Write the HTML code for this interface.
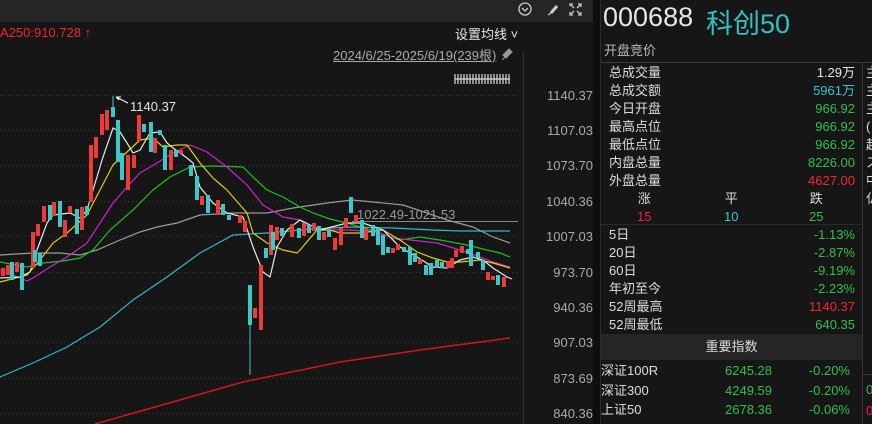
<!DOCTYPE html>
<html><head><meta charset="utf-8"><style>
*{margin:0;padding:0;box-sizing:border-box}
body{width:872px;height:424px;background:#161616;overflow:hidden;position:relative;font-family:"Liberation Sans","Noto Sans CJK SC",sans-serif;font-size:13px;color:#ddd}
.a{position:absolute;white-space:nowrap}
.r{text-align:right}
.g{color:#2fbf4f}.rd{color:#f0262e}.c{color:#3cc4d0}.w{color:#e6e6e6}
</style></head><body>
<div class="a" style="left:0;top:0;width:594px;height:22px;background:#252525"></div>
<svg class="a" style="left:0;top:0" width="600" height="424">
<g fill="none" stroke="#ccc" stroke-width="1.3">
<circle cx="525" cy="9" r="6"/><path d="M522 8l3 3 3-3"/>
<path d="M551 13l6-7" stroke-width="3"/><path d="M548 15l3-2"/>
<path d="M570 6v-2h3M578 4h3v3M570 12v3h3M578 15h3v-3M571 5l3 3M580 5l-3 3M571 14l3-3M580 14l-3-3"/>
</g>
<g stroke="#3a3a3a" stroke-dasharray="1 3">
<line x1="0" y1="95.5" x2="520" y2="95.5"/><line x1="0" y1="130.5" x2="520" y2="130.5"/><line x1="0" y1="165.5" x2="520" y2="165.5"/><line x1="0" y1="201.5" x2="520" y2="201.5"/><line x1="0" y1="236.5" x2="520" y2="236.5"/><line x1="0" y1="272.5" x2="520" y2="272.5"/><line x1="0" y1="307.5" x2="520" y2="307.5"/><line x1="0" y1="342.5" x2="520" y2="342.5"/><line x1="0" y1="378.5" x2="520" y2="378.5"/><line x1="0" y1="413.5" x2="520" y2="413.5"/>
</g>
<line x1="523.5" y1="52" x2="523.5" y2="424" stroke="#333"/>
<line x1="352" y1="221.5" x2="518" y2="221.5" stroke="#888"/>
<g fill="none" stroke-width="1.2">
<polyline stroke="#2fb8c8" points="0,377 33,363 67,347 100,327 133,300 167,277 200,253 233,235 267,233 300,230 347,227 393,228 433,230 460,231 510,231"/>
<polyline stroke="#d01818" stroke-width="1.5" points="95,424 243,382 340,362 420,350 510,338"/>
<polyline stroke="#9a9a9a" points="0,255 33,253 60,253 80,255 97,250 120,240 140,232 157,227 177,223 200,215 233,213 267,213 293,208 327,203 352,200 373,202 403,205 427,213 447,220 473,227 493,237 510,243"/>
<polyline stroke="#1fbf1f" points="0,262 27,267 43,263 63,261 80,258 93,250 110,230 133,210 153,190 170,177 190,167 213,166 243,167 253,177 267,190 283,197 300,207 313,213 330,219 347,223 360,227 400,240 420,237 440,240 467,245 487,250 500,253 510,257"/>
<polyline stroke="#d020d0" points="0,270 13,275 27,281 33,278 50,267 67,257 87,243 100,223 113,203 127,187 140,173 157,163 173,153 190,145 207,152 227,167 247,185 263,205 283,217 300,220 313,230 333,230 350,230 377,232 393,238 437,243 460,250 480,257 493,262 510,267"/>
<polyline stroke="#e0d000" points="0,282 27,275 40,260 53,243 67,233 87,215 100,190 113,165 127,152 140,140 153,138 163,147 177,145 187,145 200,163 213,178 227,190 247,213 253,233 267,243 283,250 297,253 300,250 317,230 330,230 340,233 360,233 383,230 400,240 417,252 433,258 447,262 460,262 480,260 493,263 510,268"/>
<polyline stroke="#e8e8e8" points="0,278 20,277 30,272 37,250 47,223 53,215 70,213 80,218 87,210 93,190 103,157 113,128 120,132 127,143 133,153 140,150 150,133 160,132 167,143 173,148 187,158 193,163 200,187 213,203 227,213 243,217 253,247 263,272 270,277 277,247 287,230 300,220 320,230 347,223 363,223 383,230 400,247 417,257 433,267 447,268 460,260 473,257 483,260 493,268 507,277 512,279"/>
</g>
<g fill="#f03a3a">
<rect x="1" y="268" width="4" height="8"/><rect x="6" y="265" width="4" height="10"/><rect x="15" y="262" width="4" height="10"/><rect x="31" y="232" width="4" height="36"/><rect x="36" y="224" width="4" height="12"/><rect x="42" y="206" width="4" height="16"/><rect x="52" y="202" width="4" height="14"/><rect x="63" y="220" width="4" height="17"/><rect x="68" y="206" width="4" height="7"/><rect x="80" y="207" width="4" height="23"/><rect x="89" y="145" width="4" height="57"/><rect x="94" y="137" width="4" height="21"/><rect x="100" y="114" width="4" height="21"/><rect x="105" y="110" width="4" height="20"/><rect x="126" y="155" width="4" height="35"/><rect x="132" y="155" width="4" height="13"/><rect x="137" y="115" width="4" height="26"/><rect x="153" y="138" width="4" height="15"/><rect x="169" y="150" width="4" height="20"/><rect x="179" y="150" width="4" height="4"/><rect x="200" y="196" width="4" height="9"/><rect x="216" y="200" width="4" height="15"/><rect x="238" y="215" width="4" height="8"/><rect x="243" y="221" width="4" height="11"/><rect x="253" y="308" width="4" height="10"/><rect x="259" y="265" width="4" height="65"/><rect x="275" y="227" width="4" height="13"/><rect x="269" y="225" width="4" height="30"/><rect x="290" y="224" width="4" height="13"/><rect x="302" y="223" width="4" height="13"/><rect x="312" y="223" width="4" height="8"/><rect x="322" y="232" width="4" height="8"/><rect x="333" y="238" width="4" height="12"/><rect x="339" y="228" width="4" height="17"/><rect x="344" y="218" width="4" height="10"/><rect x="354" y="215" width="4" height="7"/><rect x="364" y="228" width="4" height="12"/><rect x="391" y="248" width="4" height="5"/><rect x="396" y="244" width="4" height="6"/><rect x="418" y="259" width="4" height="5"/><rect x="446" y="262" width="4" height="6"/><rect x="450" y="258" width="4" height="10"/><rect x="454" y="250" width="4" height="7"/><rect x="460" y="246" width="4" height="7"/><rect x="486" y="272" width="4" height="8"/><rect x="491" y="276" width="4" height="4"/><rect x="502" y="277" width="4" height="10"/>
</g>
<g fill="#3cc8c8">
<rect x="10" y="262" width="4" height="18"/><rect x="20" y="263" width="4" height="27"/><rect x="33" y="250" width="4" height="12"/><rect x="38" y="253" width="4" height="13"/><rect x="48" y="205" width="4" height="15"/><rect x="58" y="201" width="4" height="26"/><rect x="75" y="209" width="4" height="25"/><rect x="85" y="206" width="4" height="9"/><rect x="111" y="107" width="4" height="10"/><rect x="116" y="120" width="4" height="42"/><rect x="120" y="153" width="4" height="27"/><rect x="142" y="124" width="4" height="8"/><rect x="149" y="122" width="4" height="30"/><rect x="158" y="130" width="4" height="5"/><rect x="163" y="145" width="4" height="25"/><rect x="174" y="150" width="4" height="7"/><rect x="189" y="165" width="4" height="11"/><rect x="195" y="176" width="4" height="24"/><rect x="206" y="195" width="4" height="18"/><rect x="221" y="204" width="4" height="11"/><rect x="227" y="215" width="4" height="5"/><rect x="248" y="285" width="4" height="40"/><rect x="264" y="248" width="4" height="10"/><rect x="271" y="232" width="4" height="18"/><rect x="280" y="228" width="4" height="8"/><rect x="297" y="228" width="4" height="10"/><rect x="307" y="225" width="4" height="8"/><rect x="317" y="226" width="4" height="14"/><rect x="327" y="230" width="4" height="7"/><rect x="349" y="197" width="4" height="16"/><rect x="360" y="220" width="4" height="18"/><rect x="371" y="225" width="4" height="11"/><rect x="376" y="228" width="4" height="17"/><rect x="381" y="235" width="4" height="20"/><rect x="386" y="247" width="4" height="6"/><rect x="402" y="247" width="4" height="5"/><rect x="408" y="247" width="4" height="18"/><rect x="413" y="253" width="4" height="9"/><rect x="424" y="265" width="4" height="10"/><rect x="429" y="263" width="4" height="12"/><rect x="435" y="260" width="4" height="8"/><rect x="440" y="262" width="4" height="6"/><rect x="466" y="249" width="4" height="5"/><rect x="469" y="240" width="4" height="26"/><rect x="476" y="252" width="4" height="6"/><rect x="481" y="260" width="4" height="10"/><rect x="496" y="275" width="4" height="10"/>
</g>
<line x1="250" y1="325" x2="250" y2="375" stroke="#3cc8c8"/><line x1="113" y1="96" x2="113" y2="108" stroke="#3cc8c8"/>
<path d="M116 97l12 6M116 97l5 0M116 97l3 3" stroke="#fff" fill="none"/>
<path d="M455 79h55M455 74v10M458 74v10M461 74v10M464 74v10M467 74v10M470 74v10M473 74v10M476 74v10M479 74v10M482 74v10M485 74v10M488 74v10M491 74v10M494 74v10M497 74v10M500 74v10M503 74v10M506 74v10M509 74v10" stroke="#ddd" stroke-width="1.2"/>
<path d="M503 55l6-6 3 3-6 6zM505 57l-3 3" fill="#999" stroke="#999"/>
</svg>
<div class="a rd" style="left:0;top:25px;font-size:13px">A250:910.728 ↑</div>
<div class="a w" style="left:455px;top:24px">设置均线 ˅</div>
<div class="a" style="left:333px;top:45px;color:#aaa;text-decoration:underline">2024/6/25-2025/6/19(239根)</div>
<div class="a w" style="left:130px;top:99px">1140.37</div>
<div class="a" style="left:357px;top:207px;color:#999">1022.49-1021.53</div>
<div class="a r" style="left:530px;width:63px;top:88px;color:#aaa;line-height:16px">1140.37</div>
<div class="a r" style="left:530px;width:63px;top:123px;color:#aaa;line-height:16px">1107.03</div>
<div class="a r" style="left:530px;width:63px;top:158px;color:#aaa;line-height:16px">1073.70</div>
<div class="a r" style="left:530px;width:63px;top:194px;color:#aaa;line-height:16px">1040.36</div>
<div class="a r" style="left:530px;width:63px;top:229px;color:#aaa;line-height:16px">1007.03</div>
<div class="a r" style="left:530px;width:63px;top:265px;color:#aaa;line-height:16px">973.70</div>
<div class="a r" style="left:530px;width:63px;top:300px;color:#aaa;line-height:16px">940.36</div>
<div class="a r" style="left:530px;width:63px;top:335px;color:#aaa;line-height:16px">907.03</div>
<div class="a r" style="left:530px;width:63px;top:371px;color:#aaa;line-height:16px">873.69</div>
<div class="a r" style="left:530px;width:63px;top:406px;color:#aaa;line-height:16px">840.36</div>

<div class="a" style="left:593px;top:0;width:8px;height:424px;background:#0e0e0e"></div>
<div class="a" style="left:600px;top:0;width:1px;height:424px;background:#2c2c2c"></div>
<div class="a" style="left:601px;top:62px;width:271px;height:1px;background:#3a3a3a"></div>
<div class="a" style="left:862px;top:62px;width:1px;height:362px;background:#333"></div>
<div class="a w" style="left:603px;top:2px;font-size:27px">000688</div>
<div class="a" style="left:706px;top:2px;font-size:27px;color:#2fc4c4">科创50</div>
<div class="a" style="left:604px;top:40px;color:#bbb">开盘竞价</div>
<div class="a" style="left:609px;top:64px;line-height:18px">总成交量<br>总成交额<br>今日开盘<br>最高点位<br>最低点位<br>内盘总量<br>外盘总量</div>
<div class="a r" style="left:760px;width:95px;top:64px;line-height:18px"><span class="w">1.29万</span><br><span class="c">5961万</span><br><span class="g">966.92</span><br><span class="g">966.92</span><br><span class="g">966.92</span><br><span class="g">8226.00</span><br><span class="rd">4627.00</span></div>
<div class="a" style="left:637px;top:190px;line-height:18px;text-align:center">涨<br><span class="rd">15</span></div>
<div class="a" style="left:724px;top:190px;line-height:18px;text-align:center">平<br><span class="c">10</span></div>
<div class="a" style="left:809px;top:190px;line-height:18px;text-align:center">跌<br><span class="g">25</span></div>
<div class="a" style="left:601px;top:224px;width:261px;height:1px;background:#2a2a2a"></div>
<div class="a" style="left:609px;top:226px;line-height:18px">5日<br>20日<br>60日<br>年初至今<br>52周最高<br>52周最低</div>
<div class="a r g" style="left:760px;width:95px;top:226px;line-height:18px">-1.13%<br>-2.87%<br>-9.19%<br>-2.23%<br><span class="rd">1140.37</span><br>640.35</div>
<div class="a" style="left:601px;top:334px;width:261px;height:26px;background:#252525;text-align:center;line-height:26px">重要指数</div>
<div class="a" style="left:601px;top:361px;line-height:19.5px">深证100R<br>深证300<br>上证50</div>
<div class="a r g" style="left:680px;width:92px;top:361px;line-height:19.5px">6245.28<br>4249.59<br>2678.36</div>
<div class="a r g" style="left:780px;width:70px;top:361px;line-height:19.5px">-0.20%<br>-0.20%<br>-0.06%</div>
<div class="a" style="left:866px;top:64px;line-height:18px">主<br>主<br>主<br>(<br>起<br>ス<br>中<br>仏</div>
<div class="a g" style="left:866px;top:382px">0</div>
<div class="a rd" style="left:866px;top:403px">0</div>
<div class="a" style="left:863px;top:374px;width:9px;height:1px;background:#333"></div>
</body></html>
